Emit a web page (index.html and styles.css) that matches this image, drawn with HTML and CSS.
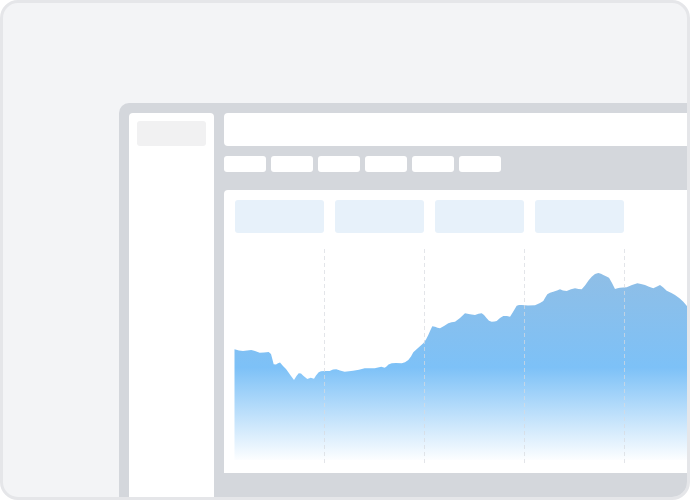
FILE: index.html
```html
<!DOCTYPE html>
<html lang="en">
<head>
<meta charset="utf-8">
<title>Dashboard preview</title>
<link rel="stylesheet" href="styles.css">
</head>
<body>
<div class="frame">
  <div class="window">
    <aside class="sidebar">
      <div class="side-item"></div>
    </aside>
    <main class="main">
      <div class="header"></div>
      <div class="tabs">
        <div class="tab"></div><div class="tab"></div><div class="tab"></div>
        <div class="tab"></div><div class="tab"></div><div class="tab"></div>
      </div>
      <section class="content">
        <div class="stats">
          <div class="stat"></div><div class="stat"></div><div class="stat"></div><div class="stat"></div>
        </div>
        <svg class="chart" width="470" height="240" viewBox="224 233 470 240" xmlns="http://www.w3.org/2000/svg">
          <defs>
            <linearGradient id="fill" gradientUnits="userSpaceOnUse" x1="0" y1="273" x2="0" y2="462">
              <stop offset="0" stop-color="#8fbee6"/>
              <stop offset="0.5" stop-color="#7dc1f7"/>
              <stop offset="1" stop-color="#ffffff"/>
            </linearGradient>
          </defs>
          <path fill="url(#fill)" d="M234.5 460 L234.5 349.3 L239 350.5 L243 351 L247 350.4 L251.3 350 L255 351 L259.7 352.7 L264 352.6 L268.7 352 L271 354 L273.7 364.3 L276 364.5 L278 363.3 L280 362.6 L283 366 L286 369 L288 371.7 L291 376 L294 380 L296.5 376 L298.7 373.3 L301 373.6 L303 375.5 L307.3 379 L310.7 377.7 L314 378.7 L316 375.5 L318.7 372.3 L321 371.2 L324.7 371 L329.7 371 L333 369.6 L336.3 369.3 L340 370.4 L344.7 371.7 L349 371.3 L353 370.7 L359 369.8 L364.7 368.3 L370 368.2 L374.7 368.3 L378 367.6 L381.3 366.7 L384.7 367.8 L386.5 366.5 L388.5 364.5 L391.7 363.3 L396 363.1 L401.7 363.3 L405 362.2 L408.3 360 L411 356.5 L413.3 352.3 L418 348 L423.3 343.3 L426 339.5 L428.3 335 L430.5 330 L432.3 326.3 L435 326.7 L437.5 327.8 L440 328.3 L444 326 L448.3 323.3 L451.5 322.2 L455 321.7 L460 318 L465 313.3 L470 314.2 L475 315 L478.5 313.8 L481.7 313.3 L484 315 L486.7 318.3 L489 320.7 L491.7 321.7 L494.5 321.6 L496.7 321 L500 318 L503.3 316 L507 316 L510 316.7 L513 312 L516.7 305.7 L519 305.1 L521.7 305 L528 305.4 L535 305.2 L540 303 L543.3 301 L545 298 L547.3 294.3 L550 292.8 L553.3 291.7 L557 290.4 L560 289.3 L563 290.6 L566.7 291 L571 289.2 L575 288.3 L578.5 288.9 L581.7 289.3 L585 285.5 L588.5 280.5 L591.7 276.7 L595 274 L598.3 273 L601 273.7 L603.3 275 L606 276.2 L609 277.7 L612 283 L615 289 L617.5 288.3 L620 287.7 L623 287.4 L626.7 287.3 L632 285 L637.3 283.3 L641 283.9 L645 285 L649 286.8 L653.3 288.3 L657 286.4 L660 285 L663 287.2 L666.7 290.7 L671 292.8 L675 295 L679.5 298.2 L683.3 301.7 L686.7 305.7 L690 309 L694 313 L694 460 Z"/>
          <g class="grid">
            <line x1="324.5" y1="249" x2="324.5" y2="463"/>
            <line x1="424.5" y1="249" x2="424.5" y2="463"/>
            <line x1="524.5" y1="249" x2="524.5" y2="463"/>
            <line x1="624.5" y1="249" x2="624.5" y2="463"/>
          </g>
        </svg>
      </section>
    </main>
  </div>
</div>
</body>
</html>
```
FILE: styles.css
```css
html, body {
  margin: 0;
  padding: 0;
  background: #ffffff;
  font-family: "Liberation Sans", Arial, sans-serif;
}

.frame {
  box-sizing: border-box;
  width: 690px;
  height: 500px;
  border: 3px solid #e5e6e9;
  border-radius: 18px;
  background: #f3f4f6;
  overflow: hidden;
  padding: 100px 0 0 116px;
}

.window {
  box-sizing: border-box;
  width: 585px;
  height: 420px;
  background: #d4d7dc;
  border-top-left-radius: 10px;
  padding: 10px 0 0 10px;
  display: flex;
  gap: 10px;
}

.sidebar {
  width: 85px;
  flex: none;
  background: #ffffff;
  border-radius: 4px 4px 0 0;
  padding: 8px;
  box-sizing: border-box;
}

.side-item {
  height: 25px;
  background: #f1f1f2;
  border-radius: 3px;
}

.main {
  width: 470px;
  flex: none;
  display: flex;
  flex-direction: column;
}

.header {
  height: 33px;
  background: #ffffff;
  border-radius: 4px 0 0 4px;
}

.tabs {
  display: flex;
  gap: 5px;
  margin-top: 10px;
}

.tab {
  width: 42px;
  height: 16px;
  background: #ffffff;
  border-radius: 3px;
}

.content {
  margin-top: 18px;
  height: 283px;
  background: #ffffff;
  border-radius: 4px 0 0 0;
  display: flex;
  flex-direction: column;
}

.stats {
  display: flex;
  gap: 11px;
  padding: 10px 0 0 11px;
}

.stat {
  width: 89px;
  height: 33px;
  background: #e7f1fa;
  border-radius: 3px;
}

.chart {
  display: block;
}

.grid line {
  stroke: #d8dbe0;
  stroke-width: 1;
  stroke-dasharray: 4 3;
  opacity: 0.7;
}
```
